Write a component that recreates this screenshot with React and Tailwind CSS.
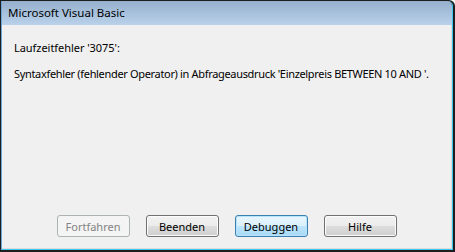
import React from "react";

function Btn({ children, variant }) {
  const base =
    "w-[73px] h-[22px] rounded-[3px] border flex items-center justify-center text-[11px] leading-none";
  if (variant === "disabled")
    return (
      <div className={base + " border-[#adb2b5] bg-[#f4f4f4] text-[#838383]"}>{children}</div>
    );
  if (variant === "default")
    return (
      <div
        className={
          base +
          " border-[#3c7fb1] text-black bg-[linear-gradient(to_bottom,#eaf6fd_0%,#d9f0fc_50%,#bee6fd_50%,#a7d9f5_100%)] shadow-[inset_0_0_0_1px_#b6e4fb]"
        }
      >
        {children}
      </div>
    );
  return (
    <div
      className={
        base +
        " border-[#707070] text-black bg-[linear-gradient(to_bottom,#f2f2f2_0%,#ebebeb_50%,#dddddd_50%,#cfcfcf_100%)] shadow-[inset_0_0_0_1px_#fcfcfc]"
      }
    >
      {children}
    </div>
  );
}

export default function App() {
  return (
    <div
      className="w-[455px] h-[252px] bg-[#1e1e1e] pl-px pt-px pr-[2px] pb-[2px] rounded-tr-[6px]"
      style={{ fontFamily: '"Noto Sans", "Open Sans", sans-serif' }}
    >
      <div className="w-full h-full flex flex-col border-l border-l-[#6aa7d6] border-r border-r-[#3fc6ee] border-b border-b-[#3fc6ee] rounded-tr-[5px] overflow-hidden">
        <div className="h-[24px] shrink-0 bg-[linear-gradient(to_bottom,#95b0cd,#b9d1ea)] flex items-center pl-[6px] text-[11.5px] text-black">
          Microsoft Visual Basic
        </div>
        <div className="flex-1 bg-[#f0f0f0] flex flex-col border-r border-r-[#dcdcdc] border-b border-b-[#dcdcdc]">
          <div className="pl-[12px] pt-[15px] text-[11px] text-black leading-[16px] whitespace-nowrap">
            <div className="tracking-[-0.05px]">Laufzeitfehler '3075':</div>
            <div className="mt-[10px] tracking-[-0.33px]">
              Syntaxfehler (fehlender Operator) in Abfrageausdruck 'Einzelpreis BETWEEN 10 AND '.
            </div>
          </div>
          <div className="flex-1" />
          <div className="flex justify-center gap-[16px] pb-[11px]">
            <Btn variant="disabled">Fortfahren</Btn>
            <Btn>Beenden</Btn>
            <Btn variant="default">Debuggen</Btn>
            <Btn>Hilfe</Btn>
          </div>
        </div>
      </div>
    </div>
  );
}
